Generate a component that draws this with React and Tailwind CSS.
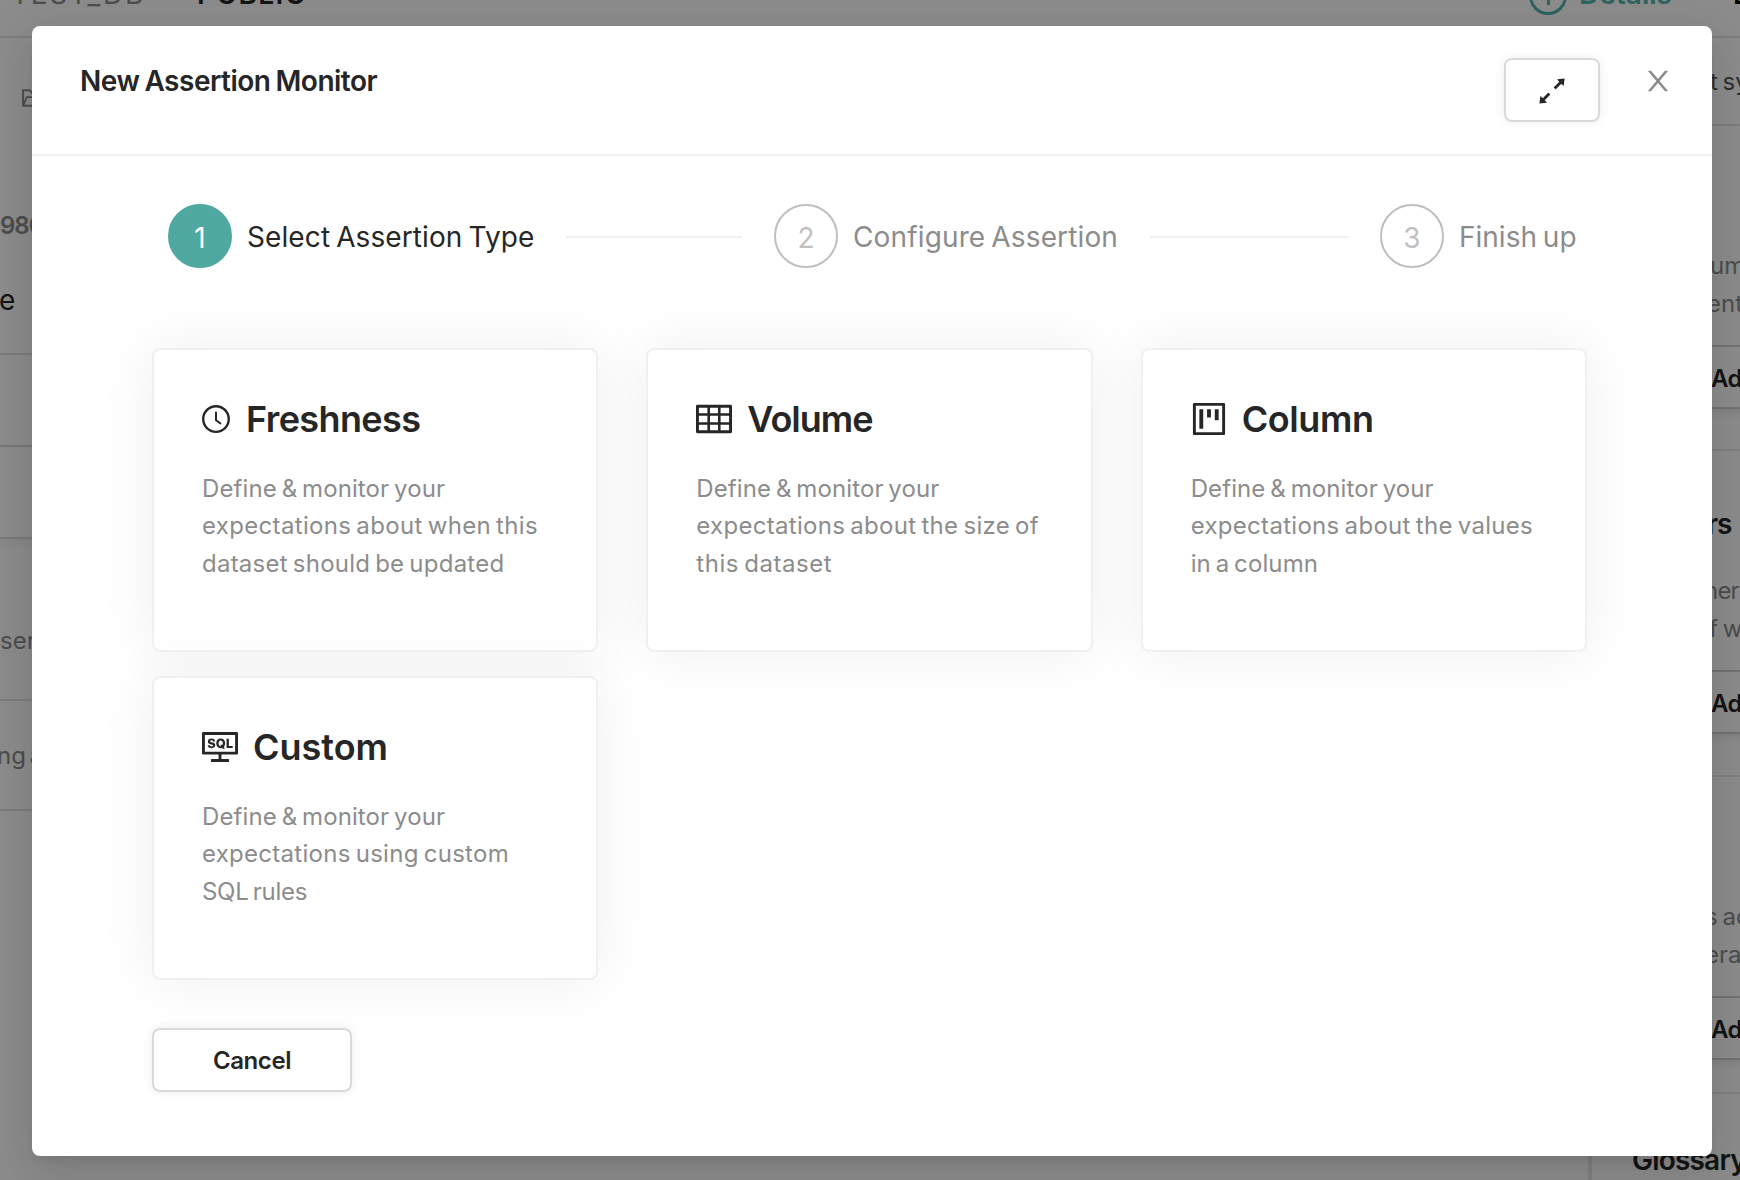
import React from "react";
import {
  AiOutlineClockCircle,
  AiOutlineTable,
  AiOutlineProject,
  AiOutlineConsoleSql,
  AiOutlineArrowsAlt,
  AiOutlineFolderOpen,
} from "react-icons/ai";

const CROP = "64 64 896 896";

const CARDS = [
  {
    title: "Freshness",
    track: "tracking-[-0.6px] pl-px",
    Icon: AiOutlineClockCircle,
    size: 28,
    lines: [
      ["Define & monitor your", "tracking-[0.1px]"],
      ["expectations about when this", "tracking-[0.33px]"],
      ["dataset should be updated", "tracking-[0.24px]"],
    ],
  },
  {
    title: "Volume",
    track: "tracking-[-1px]",
    Icon: AiOutlineTable,
    size: 36,
    lines: [
      ["Define & monitor your", "tracking-[0.1px]"],
      ["expectations about the size of", "tracking-[0.3px]"],
      ["this dataset", "tracking-[0.53px]"],
    ],
  },
  {
    title: "Column",
    track: "tracking-[-0.4px]",
    Icon: AiOutlineProject,
    size: 36,
    lines: [
      ["Define & monitor your", "tracking-[0.1px]"],
      ["expectations about the values", "tracking-[0.3px]"],
      ["in a column", "tracking-[0.1px]"],
    ],
  },
  {
    title: "Custom",
    track: "tracking-[0px]",
    Icon: AiOutlineConsoleSql,
    size: 36,
    lines: [
      ["Define & monitor your", "tracking-[0.1px]"],
      ["expectations using custom", "tracking-[0.28px]"],
      ["SQL rules", "tracking-[-0.3px]"],
    ],
  },
];

function Card({ title, track, Icon, size, lines }) {
  return (
    <div className="h-[304px] rounded-lg border-2 border-[#f0f0f0] bg-white p-12 shadow-[0_0_60px_0_#efefef]">
      <div className="flex h-[42px] items-center gap-[15px]">
        <Icon viewBox={CROP} size={size} className="shrink-0" />
        <h2 className={`text-[36px] font-semibold leading-[42px] ${track}`}>{title}</h2>
      </div>
      <p className="mt-[30px] whitespace-nowrap text-[24px] leading-[37.4px] text-[#8c8c8c] [word-spacing:-2px]">
        {lines.map(([line, spacing]) => (
          <span key={line} className={`block ${spacing}`}>
            {line}
          </span>
        ))}
      </p>
    </div>
  );
}

function Step({ n, label, active, last, track }) {
  return (
    <div className={`flex items-center ${last ? "" : "w-[606px] pr-8"}`}>
      <div
        className={`flex h-16 w-16 shrink-0 items-center justify-center rounded-full border-2 pt-1 text-[28px] ${
          active ? "border-[#4fa9a0] bg-[#4fa9a0] text-white" : "border-[#bfbfbf] bg-white text-[#bfbfbf]"
        }`}
      >
        {n}
      </div>
      <span
        className={`ml-[15px] whitespace-nowrap pt-0.5 text-[28px] leading-[64px] [word-spacing:-2px] ${track} ${
          active ? "text-[#262626]" : "text-[#8c8c8c]"
        }`}
      >
        {label}
      </span>
      {!last && <span className="ml-8 mt-0.5 h-0.5 flex-1 bg-[#f0f0f0]" />}
    </div>
  );
}

function SideButton() {
  return (
    <div className="ml-10 flex h-16 w-40 items-center border-2 border-[#d0d0d0] bg-white pl-[77px] pt-[3px] text-[24px] font-semibold tracking-[-0.5px] shadow-[0_4px_8px_rgba(0,0,0,0.08)]">
      Add
    </div>
  );
}

function Page() {
  return (
    <div className="flex h-full w-full flex-col overflow-hidden bg-white">
      <header className="flex h-[38px] shrink-0 items-start overflow-hidden whitespace-nowrap border-b-2 border-[#e2e2e2] text-[28px] leading-7">
        <span className="-mt-[20px] ml-[11px] w-[157px] shrink-0 tracking-[1.8px] text-[#8c8c8c]">TEST_DB</span>
        <span className="-mt-[22px] w-[29px] shrink-0 text-[#8c8c8c]">›</span>
        <span className="-mt-[20px] w-[1332px] shrink-0 font-semibold tracking-[1.4px]">PUBLIC</span>
        <span className="-mt-[23px] flex h-[38px] w-[38px] shrink-0 items-end justify-center rounded-full border-[3px] border-[#4fb5aa] pb-[7px]">
          <span className="h-3 w-[3px] bg-[#4fb5aa]" />
        </span>
        <span className="-mt-[20px] ml-3 w-[154px] shrink-0 font-semibold text-[#4fb5aa]">Details</span>
        <span className="-mt-[20px] shrink-0 font-semibold text-black">L</span>
      </header>
      <div className="flex min-h-0 flex-1">
        <main className="w-[1588px] shrink-0 overflow-hidden whitespace-nowrap">
          <div className="h-[317px] border-b-2 border-[#e2e2e2] pt-12">
            <AiOutlineFolderOpen viewBox={CROP} size={24} className="ml-[22px] text-[#8c8c8c]" />
            <div className="mt-[100px] text-[24px] font-semibold leading-8 tracking-[-1px] text-[#8c8c8c]">980</div>
            <div className="-ml-px mt-[42px] text-[28px] leading-8">e</div>
          </div>
          <div className="h-[92px] border-b-2 border-[#dcdcdc]" />
          <div className="h-[92px] border-b-2 border-[#dcdcdc] shadow-[0_4px_12px_rgba(0,0,0,0.06)]" />
          <div className="h-[162px] border-b-2 border-[#e2e2e2] pt-[86px] text-[24px] leading-8 text-[#8c8c8c]">sertion</div>
          <div className="h-[110px] border-b-2 border-[#e2e2e2] pt-[39px] text-[24px] leading-8 text-[#8c8c8c]">
            <span className="-ml-[3px] [word-spacing:-3px]">ng a</span>
          </div>
        </main>
        <aside className="min-w-0 flex-1 overflow-hidden whitespace-nowrap border-l-4 border-[#e8e8e8] text-[24px] leading-[38px] text-[#8c8c8c]">
          <div className="h-[88px] border-b-2 border-[#e2e2e2] pl-[118px] pt-[25px] text-[#555] [word-spacing:-2px]">
            t system
          </div>
          <div className="h-[325px] border-b-2 border-[#ececec] pt-[121px]">
            <div className="pl-[118px]">umentation</div>
            <div className="pl-[115px]">entity</div>
            <div className="mt-[22px] text-[#262626]">
              <SideButton />
            </div>
          </div>
          <div className="h-[326px] border-b-2 border-[#ececec] pt-[54px]">
            <div className="pl-[115px] text-[28px] font-semibold tracking-[-1px] text-[#262626]">rs</div>
            <div className="mt-[29px] pl-[112px] tracking-[-0.8px]">ners</div>
            <div className="pl-[117px] [word-spacing:-2px]">f what</div>
            <div className="mt-[22px] text-[#262626]">
              <SideButton />
            </div>
          </div>
          <div className="h-[317px] border-b-2 border-[#ececec] pt-[121px]">
            <div className="pl-[113px] [word-spacing:-2px]">s added</div>
            <div className="pl-[113px]">eral</div>
            <div className="mt-[22px] text-[#262626]">
              <SideButton />
            </div>
          </div>
          <div className="pl-[40px] pt-[47px] text-[28px] font-semibold tracking-[-0.8px] text-[#262626]">
            Glossary Terms
          </div>
        </aside>
      </div>
    </div>
  );
}

function CloseIcon() {
  return (
    <svg viewBox={CROP} width="28" height="28" fill="currentColor">
      <path d="M563.8 512l262.5-312.9c4.4-5.2.7-13.1-6.1-13.1h-79.8c-4.7 0-9.2 2.1-12.3 5.7L511.6 449.8 295.1 191.7c-3-3.6-7.5-5.7-12.3-5.7H203c-6.8 0-10.5 7.9-6.1 13.1L459.4 512 196.9 824.9A7.95 7.95 0 0 0 203 838h79.8c4.7 0 9.2-2.1 12.3-5.7l216.5-258.1 216.5 258.1c3 3.6 7.5 5.7 12.3 5.7h79.8c6.8 0 10.5-7.9 6.1-13.1L563.8 512z" />
    </svg>
  );
}

export default function App() {
  return (
    <div className="relative h-[1180px] w-[1740px] overflow-hidden font-['Inter','Liberation_Sans',sans-serif] text-[#262626]">
      <Page />
      <div className="absolute inset-0 bg-black/45 pl-8 pt-[26px]">
        <section className="h-[1130px] w-[1680px] rounded-lg bg-white shadow-[0_6px_12px_-8px_rgba(0,0,0,0.12),0_12px_32px_0_rgba(0,0,0,0.08),0_18px_56px_16px_rgba(0,0,0,0.05)]">
          <header className="flex h-[130px] items-start border-b-2 border-[#f0f0f0] pl-12 pr-10 pt-8">
            <h1 className="flex-1 whitespace-nowrap text-[28px] font-semibold leading-[46px] tracking-[-0.5px] [word-spacing:-1.5px]">
              New Assertion Monitor
            </h1>
            <button className="flex h-16 w-24 items-center justify-center rounded-lg border-2 border-[#d9d9d9] bg-white pt-px shadow-[0_0_10px_rgba(0,0,0,0.08)]">
              <AiOutlineArrowsAlt viewBox={CROP} size={32} />
            </button>
            <button className="ml-11 mt-[9px] text-[#8c8c8c]">
              <CloseIcon />
            </button>
          </header>
          <div className="pl-[120px] pr-[125px] pt-12">
            <div className="flex h-16 pl-4">
              <Step n={1} label="Select Assertion Type" active track="tracking-[0.1px]" />
              <Step n={2} label="Configure Assertion" track="tracking-[0.14px]" />
              <Step n={3} label="Finish up" last track="tracking-[0px]" />
            </div>
            <div className="mt-20 grid grid-cols-3 gap-x-12 gap-y-6">
              {CARDS.map((card) => (
                <Card key={card.title} {...card} />
              ))}
            </div>
            <button className="mt-12 flex h-16 w-[200px] items-center justify-center rounded-lg border-2 border-[#d9d9d9] bg-white pt-px text-[24px] font-semibold tracking-[-0.4px] shadow-[0_0_10px_rgba(0,0,0,0.08)]">
              Cancel
            </button>
          </div>
        </section>
      </div>
    </div>
  );
}
